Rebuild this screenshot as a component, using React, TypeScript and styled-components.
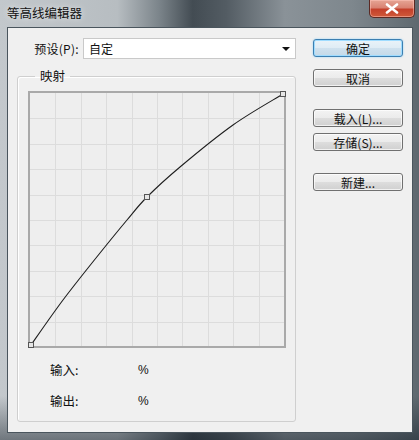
import styled, { createGlobalStyle } from "styled-components";

const GlobalStyle = createGlobalStyle`
  html, body {
    margin: 0;
    padding: 0;
    background: #5b656c;
  }
  * {
    box-sizing: border-box;
  }
`;

const uiFont = `"Noto Sans CJK SC", "Liberation Sans", sans-serif`;

type Pt = [number, number];

// curve points in graph coordinates (graph is 258 x 257)
const curvePoints: Pt[] = [
  [3, 254],
  [35, 209],
  [72, 162],
  [99, 129],
  [119, 106],
  [152, 76],
  [205, 34],
  [255, 3],
];

const anchors: Pt[] = [
  [3, 254],
  [119, 106],
  [255, 3],
];

const smoothPath = (pts: Pt[]): string => {
  let d = `M${pts[0][0]},${pts[0][1]}`;
  for (let i = 0; i < pts.length - 1; i++) {
    const p0 = pts[i - 1] || pts[i];
    const p1 = pts[i];
    const p2 = pts[i + 1];
    const p3 = pts[i + 2] || p2;
    const c1x = p1[0] + (p2[0] - p0[0]) / 6;
    const c1y = p1[1] + (p2[1] - p0[1]) / 6;
    const c2x = p2[0] - (p3[0] - p1[0]) / 6;
    const c2y = p2[1] - (p3[1] - p1[1]) / 6;
    d += ` C${c1x.toFixed(1)},${c1y.toFixed(1)} ${c2x.toFixed(1)},${c2y.toFixed(1)} ${p2[0]},${p2[1]}`;
  }
  return d;
};

const ContourGraph = (): JSX.Element => {
  const w = 258;
  const h = 257;
  const lines: number[] = [];
  for (let i = 1; i < 10; i++) lines.push(2 + (i * (w - 4)) / 10);
  return (
    <GraphSvg width={w} height={h} viewBox={`0 0 ${w} ${h}`}>
      <rect x="0" y="0" width={w} height={h} fill="#eeeeee" />
      {lines.map((v) => (
        <g key={v}>
          <line x1={Math.round(v) + 0.5} y1="2" x2={Math.round(v) + 0.5} y2={h - 2} stroke="#dcdcdc" />
          <line x1="2" y1={Math.round(v) + 0.5} x2={w - 2} y2={Math.round(v) + 0.5} stroke="#dcdcdc" />
        </g>
      ))}
      <rect x="1" y="1" width={w - 2} height={h - 2} fill="none" stroke="#a9a9a9" strokeWidth="2" />
      <path d={smoothPath(curvePoints)} fill="none" stroke="#1e1e1e" strokeWidth="1.1" />
      {anchors.map(([x, y]) => (
        <rect
          key={x}
          x={x - 2.5}
          y={y - 2.5}
          width="5"
          height="5"
          fill="#e6e6e6"
          stroke="#555"
          strokeWidth="1"
        />
      ))}
    </GraphSvg>
  );
};

const App = (): JSX.Element => {
  return (
    <>
      <GlobalStyle />
      <Window>
        <TitleBar>
          <Title>等高线编辑器</Title>
          <CloseButton>
            <svg width="14" height="11" viewBox="0 0 14 11">
              <path
                d="M2 1.5 L12 9.5 M12 1.5 L2 9.5"
                stroke="#fff"
                strokeWidth="2.6"
                strokeLinecap="round"
              />
            </svg>
          </CloseButton>
        </TitleBar>
        <Client>
          <LeftColumn>
            <PresetRow>
              <FieldLabel>预设(P):</FieldLabel>
              <Select>
                <span>自定</span>
                <Arrow />
              </Select>
            </PresetRow>
            <GroupBox>
              <Legend>映射</Legend>
              <ContourGraph />
              <Readout>
                <ReadLabel>输入:</ReadLabel>
                <ReadValue>%</ReadValue>
                <ReadLabel>输出:</ReadLabel>
                <ReadValue>%</ReadValue>
              </Readout>
            </GroupBox>
          </LeftColumn>
          <ButtonColumn>
            <Button $primary $gap={12}>确定</Button>
            <Button $gap={22}>取消</Button>
            <Button $gap={6}>载入(L)...</Button>
            <Button $gap={22}>存储(S)...</Button>
            <Button $gap={0}>新建...</Button>
          </ButtonColumn>
        </Client>
      </Window>
    </>
  );
};
export default App;

const Window = styled.div`
  width: 419px;
  height: 440px;
  display: flex;
  flex-direction: column;
  padding: 0 6px 7px 7px;
  background:
    linear-gradient(180deg, rgba(0, 0, 0, 0) 0%, rgba(0, 0, 0, 0) 90%, rgba(10, 20, 30, 0.45) 100%),
    linear-gradient(
      90deg,
      #c3c8cc 0%,
      #b7bdc1 28%,
      #7b848a 38%,
      #434c53 46%,
      #535c63 54%,
      #8a9298 68%,
      #7e878d 84%,
      #5e686f 100%
    );
  font-family: ${uiFont};
`;

const TitleBar = styled.div`
  height: 27px;
  display: flex;
  justify-content: space-between;
  align-items: flex-start;
`;

const Title = styled.span`
  margin-top: 4px;
  font-size: 12.5px;
  line-height: 17px;
  color: #111;
  text-shadow: 0 0 6px rgba(255, 255, 255, 0.7);
`;

const CloseButton = styled.div`
  width: 46px;
  height: 18px;
  margin-right: -2px;
  display: flex;
  align-items: center;
  justify-content: center;
  border: 1px solid #5b2a24;
  border-top: none;
  border-radius: 0 0 5px 5px;
  background: linear-gradient(180deg, #e6a595 0%, #d98272 45%, #c4402b 55%, #cf5a3a 100%);
  box-shadow: inset 0 0 0 1px rgba(255, 200, 190, 0.5);
`;

const Client = styled.div`
  flex: 1;
  display: grid;
  grid-template-columns: 279px 90px;
  column-gap: 17px;
  align-items: start;
  padding: 10px 0 0 9px;
  background: #f0f0f0;
  border: 1px solid #4a555d;
  font-size: 12px;
  color: #111;
`;

const LeftColumn = styled.div`
  display: flex;
  flex-direction: column;
`;

const PresetRow = styled.div`
  display: flex;
  align-items: center;
  height: 21px;
`;

const FieldLabel = styled.span`
  width: 62px;
  text-align: right;
  margin-right: 4px;
  font-size: 12px;
  letter-spacing: 0.3px;
`;

const Select = styled.div`
  flex: 1;
  height: 21px;
  display: flex;
  align-items: center;
  justify-content: space-between;
  padding: 0 4px 0 5px;
  background: #fff;
  border: 1px solid #c9c9c9;
  font-size: 12px;
`;

const Arrow = styled.span`
  width: 0;
  height: 0;
  margin-right: 1px;
  border-left: 4px solid transparent;
  border-right: 4px solid transparent;
  border-top: 4px solid #111;
`;

const GroupBox = styled.fieldset`
  margin: 9px 0 0 0;
  padding: 7px 9px 5px 10px;
  border: 1px solid #cfcfcf;
  border-radius: 3px;
  box-shadow: inset 1px 1px 0 #fff;
  min-width: 0;
`;

const Legend = styled.legend`
  margin-left: 7px;
  padding: 0 5px;
  font-size: 12.5px;
  line-height: 16px;
`;

const GraphSvg = styled.svg`
  display: block;
`;

const Readout = styled.div`
  display: grid;
  grid-template-columns: 88px auto;
  grid-auto-rows: 31px;
  align-items: center;
  margin: 6px 0 0 22px;
`;

const ReadLabel = styled.span`
  font-size: 12.5px;
`;

const ReadValue = styled.span`
  font-family: "Liberation Sans", sans-serif;
  font-size: 12px;
`;

const ButtonColumn = styled.div`
  display: flex;
  flex-direction: column;
  padding-top: 1px;
`;

const Button = styled.div<{ $primary?: boolean; $gap: number }>`
  height: 18px;
  margin-bottom: ${(p) => p.$gap}px;
  display: flex;
  align-items: center;
  justify-content: center;
  border-radius: 3px;
  font-size: 12px;
  color: #111;
  border: 1px solid ${(p) => (p.$primary ? "#3c7fb1" : "#707070")};
  background: ${(p) =>
    p.$primary
      ? "linear-gradient(180deg, #eaf3f9 0%, #dfecf5 50%, #cfe1ee 51%, #c4d9e8 100%)"
      : "linear-gradient(180deg, #f3f3f3 0%, #ebebeb 50%, #dddddd 51%, #d0d0d0 100%)"};
  box-shadow: ${(p) =>
    p.$primary
      ? "inset 0 0 0 1px #9fdcff, 0 0 2px #8fd0f8"
      : "inset 0 0 0 1px rgba(255,255,255,0.7)"};
`;
